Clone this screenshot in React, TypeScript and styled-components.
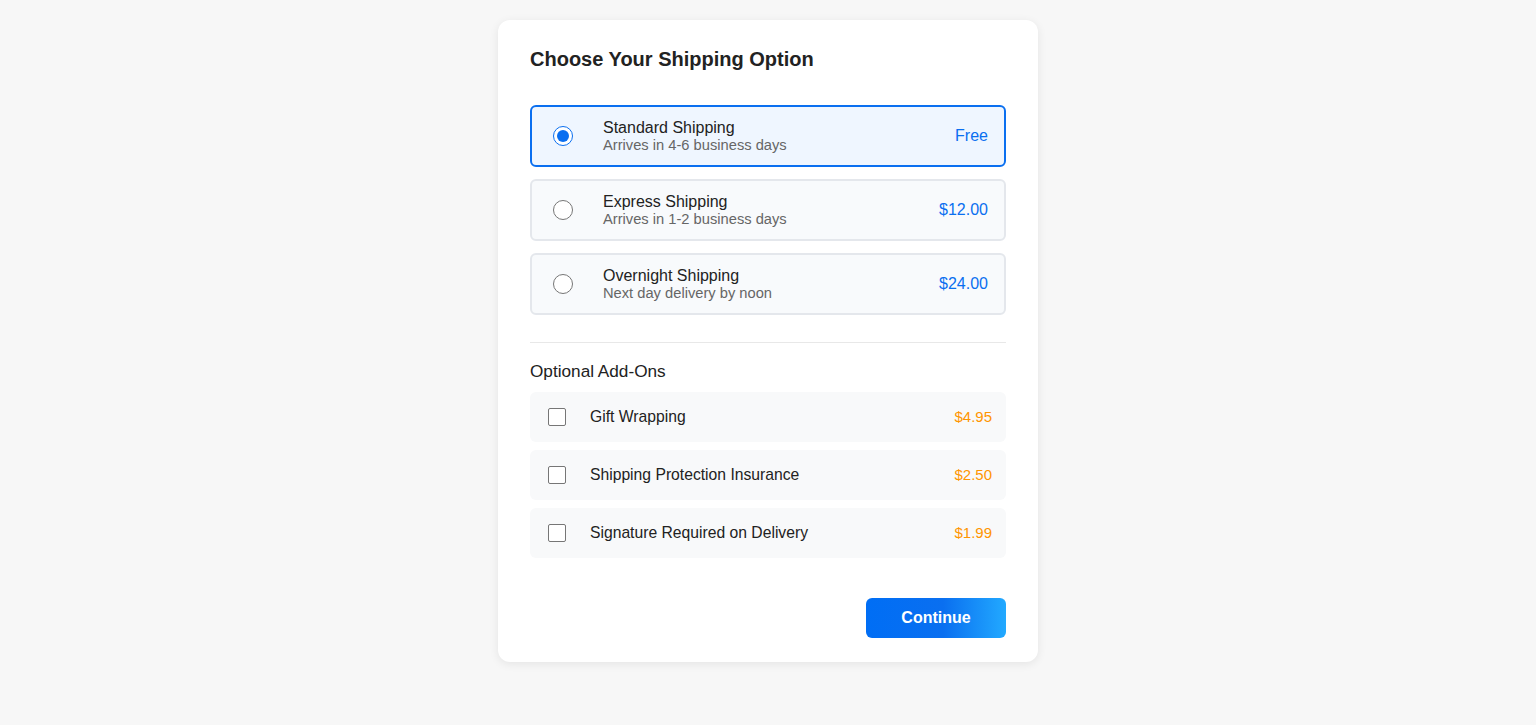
import React, { useState } from "react";
import styled, { createGlobalStyle } from "styled-components";

const Global = createGlobalStyle`
  html, body { margin: 0; padding: 0; background: #f7f7f7; }
  body { font-family: "Liberation Sans", Arial, Helvetica, sans-serif; color: #222; }
  * { box-sizing: border-box; }
`;

const Page = styled.div`
  display: flex;
  justify-content: center;
  padding: 20px 0 40px;
`;

const Card = styled.div`
  width: 540px;
  background: #fff;
  border-radius: 12px;
  box-shadow: 0 2px 10px rgba(0, 0, 0, 0.08);
  padding: 27px 32px 24px;
`;

const Title = styled.h2`
  margin: 0 0 34px;
  font-size: 20px;
  font-weight: 700;
  color: #222;
  line-height: 24px;
`;

const OptionList = styled.div`
  display: flex;
  flex-direction: column;
  gap: 12px;
`;

const OptionCard = styled.label<{ $selected: boolean }>`
  display: flex;
  align-items: center;
  height: 62px;
  padding: 0 16px 0 21px;
  border: 2px solid ${(p) => (p.$selected ? "#0a6ff0" : "#e4e7ec")};
  background: ${(p) => (p.$selected ? "#eff6ff" : "#f8fafc")};
  border-radius: 6px;
  cursor: pointer;
`;

const Radio = styled.span<{ $checked: boolean }>`
  width: 20px;
  height: 20px;
  flex: none;
  border-radius: 50%;
  border: 1px solid ${(p) => (p.$checked ? "#0a6ff0" : "#767676")};
  background: #fff;
  display: flex;
  align-items: center;
  justify-content: center;
  &::after {
    content: "";
    display: ${(p) => (p.$checked ? "block" : "none")};
    width: 12px;
    height: 12px;
    border-radius: 50%;
    background: #0a6ff0;
  }
`;

const OptionText = styled.div`
  flex: 1;
  margin-left: 30px;
  display: flex;
  flex-direction: column;
`;

const OptionName = styled.span`
  font-size: 16px;
  line-height: 19px;
  color: #222;
`;

const OptionSub = styled.span`
  font-size: 14.7px;
  line-height: 17px;
  color: #666;
`;

const OptionPrice = styled.span`
  font-size: 16px;
  color: #0a6ff0;
`;

const Divider = styled.hr`
  border: none;
  border-top: 1px solid #e8e8e8;
  margin: 27px 0 17px;
`;

const SectionTitle = styled.h3`
  margin: 0 0 10px;
  font-size: 17.2px;
  font-weight: 400;
  line-height: 22px;
  color: #222;
`;

const AddonList = styled.div`
  display: flex;
  flex-direction: column;
  gap: 8px;
`;

const AddonRow = styled.label`
  display: flex;
  align-items: center;
  height: 50px;
  padding: 0 14px 1px 18px;
  background: #f8f9fa;
  border-radius: 6px;
  cursor: pointer;
`;

const Checkbox = styled.span<{ $checked: boolean }>`
  width: 18px;
  height: 18px;
  flex: none;
  border: 1px solid #767676;
  border-radius: 2px;
  background: ${(p) => (p.$checked ? "#0a6ff0" : "#fff")};
`;

const AddonName = styled.span`
  flex: 1;
  margin-left: 24px;
  font-size: 15.7px;
  color: #222;
`;

const AddonPrice = styled.span`
  font-size: 15px;
  color: #ff9500;
`;

const Footer = styled.div`
  display: flex;
  justify-content: flex-end;
  margin-top: 40px;
`;

const ContinueButton = styled.button`
  width: 140px;
  height: 40px;
  border: none;
  border-radius: 6px;
  background: linear-gradient(90deg, #006ef5 0%, #0a6ff0 55%, #22a9ff 100%);
  color: #fff;
  font-family: "Liberation Sans", Arial, sans-serif;
  font-size: 16px;
  font-weight: 700;
  cursor: pointer;
`;

const options = [
  { id: "standard", name: "Standard Shipping", sub: "Arrives in 4-6 business days", price: "Free" },
  { id: "express", name: "Express Shipping", sub: "Arrives in 1-2 business days", price: "$12.00" },
  { id: "overnight", name: "Overnight Shipping", sub: "Next day delivery by noon", price: "$24.00" },
];

const addons = [
  { id: "gift", name: "Gift Wrapping", price: "$4.95" },
  { id: "insurance", name: "Shipping Protection Insurance", price: "$2.50" },
  { id: "signature", name: "Signature Required on Delivery", price: "$1.99" },
];

export default function App() {
  const [selected, setSelected] = useState("standard");
  const [checked, setChecked] = useState<Record<string, boolean>>({});
  return (
    <>
      <Global />
      <Page>
        <Card>
          <Title>Choose Your Shipping Option</Title>
          <OptionList>
            {options.map((o) => (
              <OptionCard key={o.id} $selected={selected === o.id} onClick={() => setSelected(o.id)}>
                <Radio $checked={selected === o.id} />
                <OptionText>
                  <OptionName>{o.name}</OptionName>
                  <OptionSub>{o.sub}</OptionSub>
                </OptionText>
                <OptionPrice>{o.price}</OptionPrice>
              </OptionCard>
            ))}
          </OptionList>
          <Divider />
          <SectionTitle>Optional Add-Ons</SectionTitle>
          <AddonList>
            {addons.map((a) => (
              <AddonRow
                key={a.id}
                onClick={() => setChecked((c) => ({ ...c, [a.id]: !c[a.id] }))}
              >
                <Checkbox $checked={!!checked[a.id]} />
                <AddonName>{a.name}</AddonName>
                <AddonPrice>{a.price}</AddonPrice>
              </AddonRow>
            ))}
          </AddonList>
          <Footer>
            <ContinueButton>Continue</ContinueButton>
          </Footer>
        </Card>
      </Page>
    </>
  );
}
